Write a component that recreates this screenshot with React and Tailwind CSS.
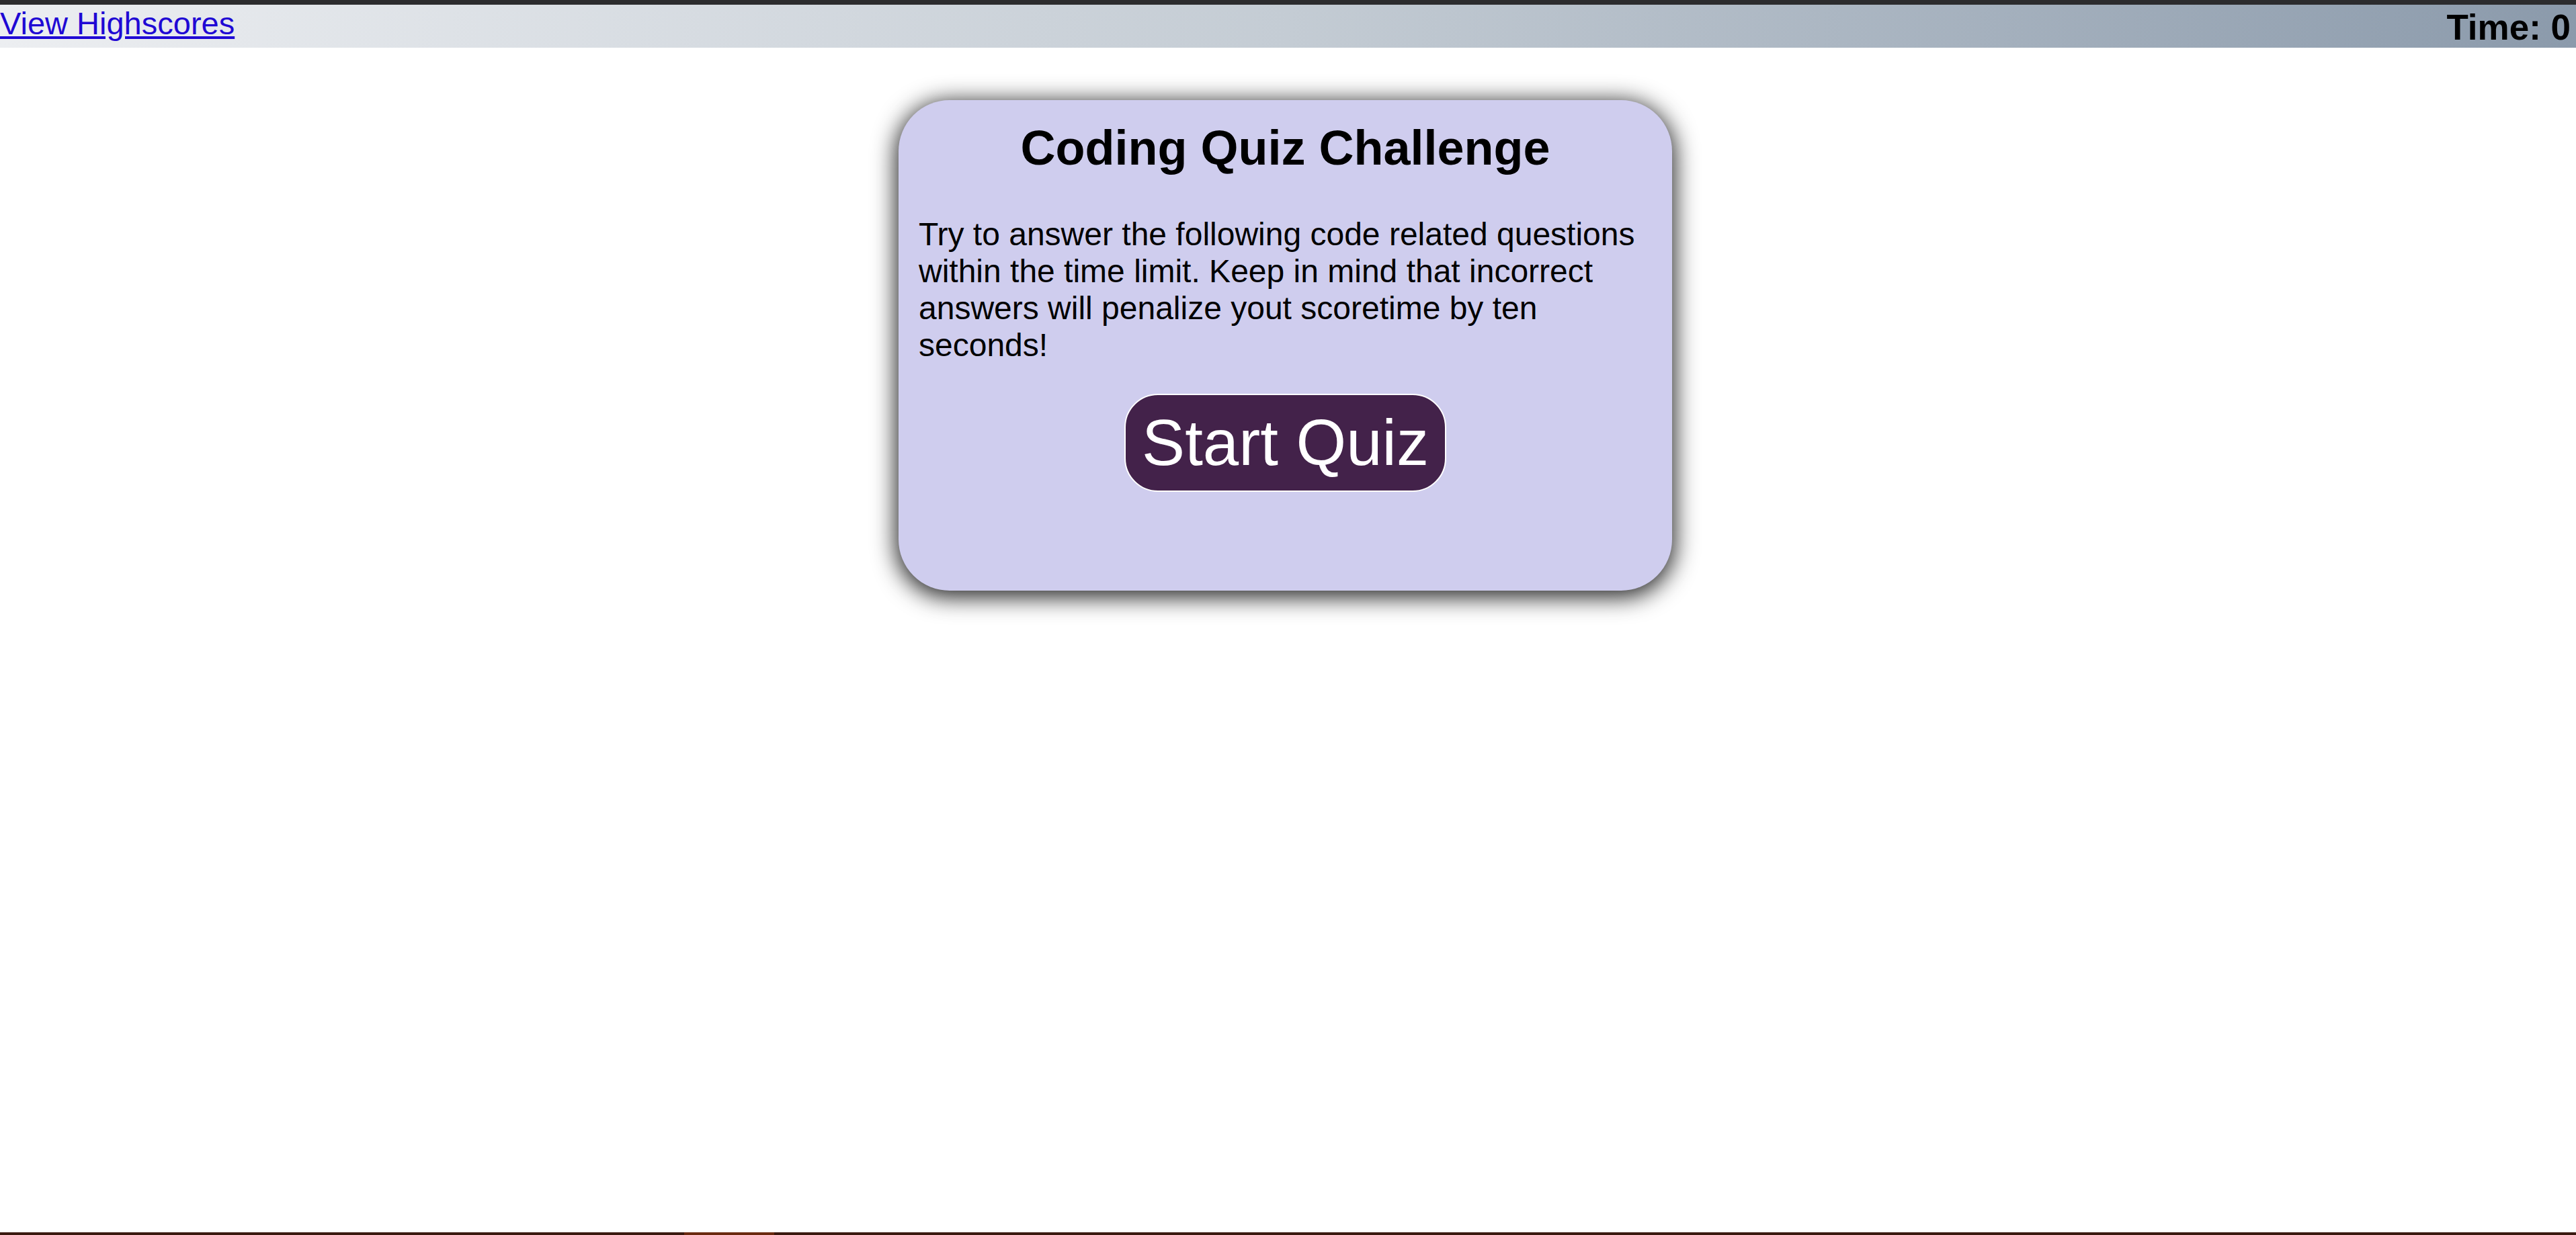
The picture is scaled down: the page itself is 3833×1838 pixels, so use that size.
export default function App() {
  return (
    <div
      className="min-h-[1838px] flex flex-col bg-white text-black"
      style={{ fontFamily: '"Liberation Sans", Arial, sans-serif' }}
    >
      <div className="h-[7px] bg-[#2c2c2e]" />
      <header className="h-[64px] flex justify-between bg-gradient-to-r from-[#eceef1] via-[#c4ccd4] to-[#8b9aab]">
        <a
          href="#"
          className="self-start text-[47px] leading-[1.15] text-[#1f08d4] underline mt-[1px]"
        >
          View Highscores
        </a>
        <div className="self-start text-[53px] leading-[1.15] font-bold pt-[4px] pr-[8px] whitespace-nowrap">
          Time: 0
        </div>
      </header>

      <main className="flex justify-center mt-[78px] pr-[8px]">
        <section className="w-[1151px] h-[730px] box-border p-[30px] bg-[#cfcdee] rounded-[76px] shadow-[0_6px_34px_4px_rgba(0,0,0,0.85)] flex flex-col items-center">
          <h1 className="m-0 text-[72px] leading-[1.15] font-bold text-center">
            Coding Quiz Challenge
          </h1>
          <p className="self-stretch mt-[59px] text-[48px] leading-[1.15]">
            Try to answer the following code related questions within the time
            limit. Keep in mind that incorrect answers will penalize yout
            scoretime by ten seconds!
          </p>
          <button
            type="button"
            className="mt-[44px] border-2 border-white bg-[#43224a] text-white text-[96px] leading-[1.15] px-[24px] py-[16px] rounded-[50px]"
          >
            Start Quiz
          </button>
        </section>
      </main>

      <div className="mt-auto h-[4px] flex bg-[#3b1a10]">
        <div className="w-[1018px]" />
        <div className="w-[134px] bg-[#6b2a10]" />
      </div>
    </div>
  );
}
